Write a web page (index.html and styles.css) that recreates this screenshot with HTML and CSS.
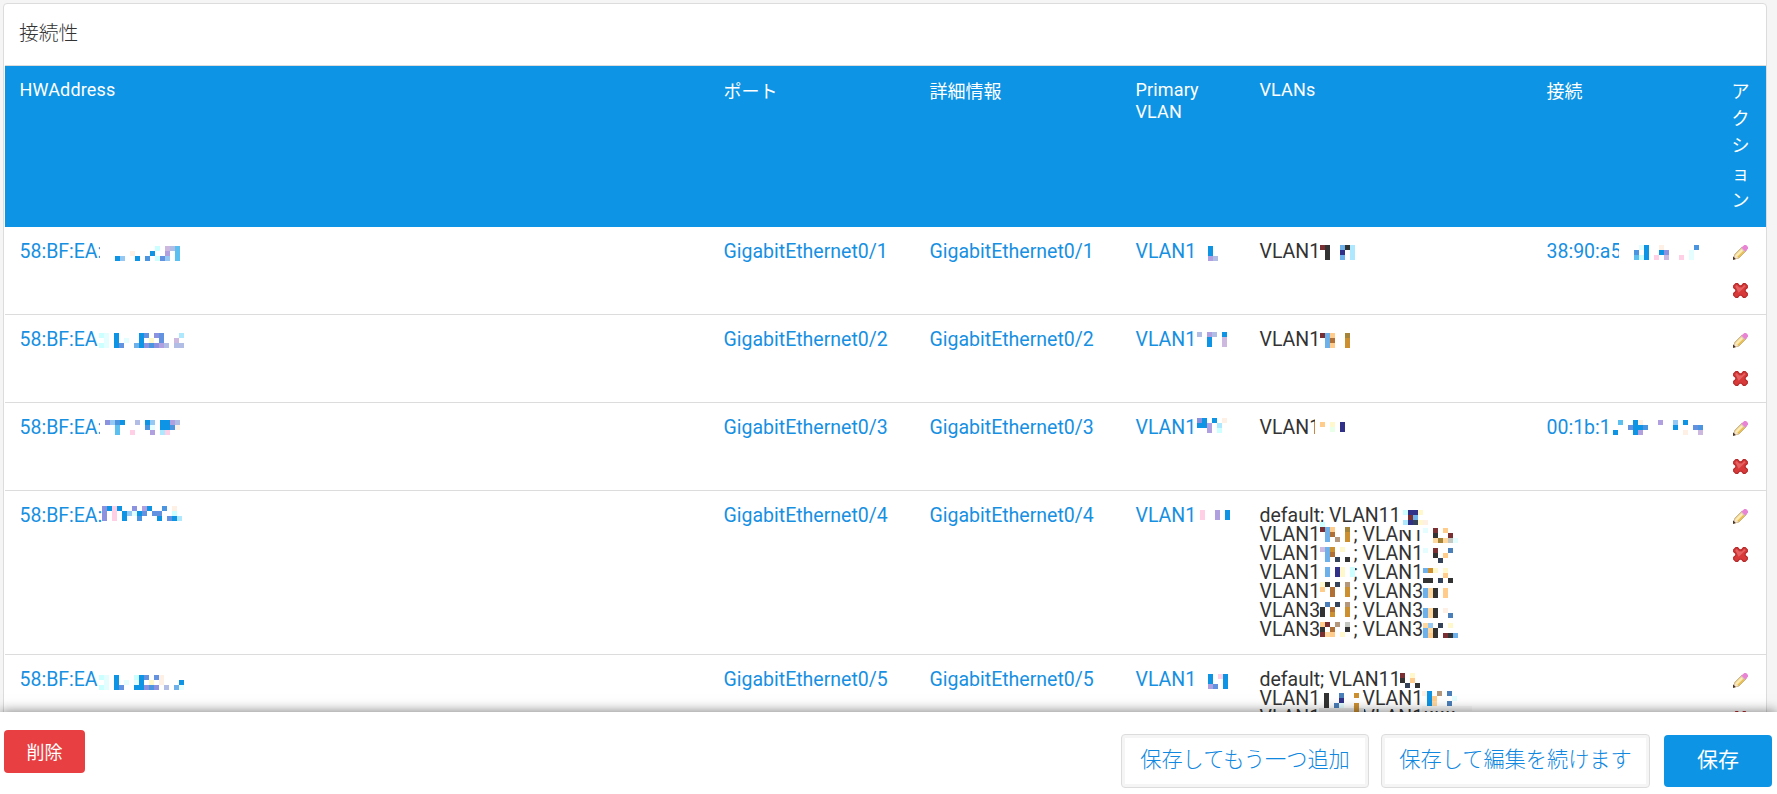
FILE: index.html
```html
<!DOCTYPE html>
<html lang="ja">
<head>
    <meta charset="UTF-8">
    <meta name="viewport" content="width=device-width, initial-scale=1.0">
    <title>接続性</title>
    <link rel="stylesheet" href="styles.css">
</head>
<body>
    <svg class="defs" width="0" height="0">
        <symbol id="pencil" viewBox="0 0 16 16">
            <path d="M1 15l1-5 8-8 4 4-8 8z" fill="#f5dda0" stroke="#b99a62" stroke-width="1"/>
            <path d="M3.500 11.500l7-7" stroke="#fff0b8" stroke-width="1.500"/>
            <path d="M5.500 13l7-7" stroke="#e8bd45" stroke-width="1.500"/>
            <path d="M1 15l1-4.500 3.500 3.500z" fill="#f4e4ce"/>
            <path d="M0 16v-4l3 3z" fill="#4a3527"/>
            <path d="M9 3l3-3h2l2 2v2l-3 3z" fill="#e884d4"/>
            <path d="M8.500 3.500l4 4" stroke="#c9bfc4" stroke-width="1"/>
        </symbol>
        <symbol id="cross" viewBox="0 0 16 16">
            <path d="M3 .7l2 0 2 2.300h2l2-2.300h2l2.300 2.300v2l-2.300 2v2l2.300 2v2l-2.300 2.300h-2l-2-2.300h-2l-2 2.300h-2l-2.300-2.300v-2l2.300-2v-2l-2.300-2v-2z" fill="#d83a3a" stroke="#b52a2a" stroke-width="1.200"/>
            <path d="M2.500 3.500l1.500-1.300 2.500 2.600h3l2.500-2.600 1.500 1.300-7.500 7z" fill="#ec7272" opacity=".7"/>
        </symbol>
    </svg>

    <main class="content">
        <section class="panel">
            <h2>接続性</h2>

            <div class="row head">
                <div>HWAddress</div>
                <div class="jp">ポート</div>
                <div class="jp">詳細情報</div>
                <div>Primary VLAN</div>
                <div>VLANs</div>
                <div class="jp">接続</div>
                <div class="jp">アクション</div>
            </div>

            <div class="row">
                <div id="hw1"><a>58:BF:EA:</a></div>
                <div><a>GigabitEthernet0/1</a></div>
                <div><a>GigabitEthernet0/1</a></div>
                <div id="primary1"><a>VLAN1</a></div>
                <div id="vlans1">VLAN1</div>
                <div id="conn1"><a>38:90:a5</a></div>
                <div class="actions"><svg><use href="#pencil"/></svg><svg><use href="#cross"/></svg></div>
            </div>

            <div class="row">
                <div id="hw2"><a>58:BF:EA</a></div>
                <div><a>GigabitEthernet0/2</a></div>
                <div><a>GigabitEthernet0/2</a></div>
                <div id="primary2"><a>VLAN1</a></div>
                <div id="vlans2">VLAN1</div>
                <div></div>
                <div class="actions"><svg><use href="#pencil"/></svg><svg><use href="#cross"/></svg></div>
            </div>

            <div class="row">
                <div id="hw3"><a>58:BF:EA:</a></div>
                <div><a>GigabitEthernet0/3</a></div>
                <div><a>GigabitEthernet0/3</a></div>
                <div id="primary3"><a>VLAN1</a></div>
                <div id="vlans3">VLAN1</div>
                <div id="conn3"><a>00:1b:1</a></div>
                <div class="actions"><svg><use href="#pencil"/></svg><svg><use href="#cross"/></svg></div>
            </div>

            <div class="row tall">
                <div id="hw4"><a>58:BF:EA:</a></div>
                <div><a>GigabitEthernet0/4</a></div>
                <div><a>GigabitEthernet0/4</a></div>
                <div id="primary4"><a>VLAN1</a></div>
                <div id="vlans4">
                    default; VLAN11<br>
                    <span class="tag">VLAN1</span>; VLAN1<br>
                    <span class="tag">VLAN1</span>; VLAN1<br>
                    <span class="tag">VLAN1</span>; VLAN1<br>
                    <span class="tag">VLAN1</span>; VLAN3<br>
                    <span class="tag">VLAN3</span>; VLAN3<br>
                    <span class="tag">VLAN3</span>; VLAN3
                </div>
                <div></div>
                <div class="actions"><svg><use href="#pencil"/></svg><svg><use href="#cross"/></svg></div>
            </div>

            <div class="row tall">
                <div id="hw5"><a>58:BF:EA</a></div>
                <div><a>GigabitEthernet0/5</a></div>
                <div><a>GigabitEthernet0/5</a></div>
                <div id="primary5"><a>VLAN1</a></div>
                <div id="vlans5">
                    default; VLAN11<br>
                    <span class="tag">VLAN1</span>; VLAN1<br>
                    <span class="tag">VLAN1</span>; VLAN1000
                </div>
                <div></div>
                <div class="actions"><svg><use href="#pencil"/></svg><svg><use href="#cross"/></svg></div>
            </div>
        </section>
    </main>

    <footer class="toolbar">
        <button class="delete">削除</button>
        <div class="save-buttons">
            <button class="secondary">保存してもう一つ追加</button>
            <button class="secondary">保存して編集を続けます</button>
            <button class="primary">保存</button>
        </div>
    </footer>

    <script src="mosaic.js"></script>
</body>
</html>
```
FILE: styles.css
```css
* {
    box-sizing: border-box;
}

body {
    margin: 0;
    height: 100vh;
    display: flex;
    flex-direction: column;
    overflow: hidden;
    background: #f5f5f5;
    color: #333;
    font-family: Roboto, "Noto Sans CJK JP", sans-serif;
    font-size: 19.5px;
    line-height: 19px;
}

.defs {
    position: absolute;
}

.content {
    flex: 1;
    min-height: 0;
    overflow: hidden;
    padding: 3px 10px 0 3px;
}

.panel {
    background: #fff;
    border: 1px solid #dcdcdc;
    border-radius: 4px;
    padding-left: 1px;
}

.panel h2 {
    margin: 0;
    height: 62px;
    padding-left: 14px;
    border-bottom: 1px solid #dcdcdc;
    font-size: 19.8px;
    font-weight: 300;
    line-height: 60px;
    color: #333;
}

.row {
    display: grid;
    grid-template-columns: 704px 206px 206px 124px 287px 185px 49px;
    height: 88px;
    border-bottom: 1px solid #dcdcdc;
}

.row > div {
    position: relative;
    padding: 15px 15px 0 14.5px;
}

.row.tall {
    height: 164px;
}

.row.head {
    height: 161px;
    border-bottom: none;
    background: #0e94e4;
    color: #fff;
    font-size: 18px;
    letter-spacing: 0.15px;
    line-height: 22px;
}

.row.head > div {
    padding-top: 13px;
}

.row.head .jp {
    padding-top: 12px;
    letter-spacing: 0;
    line-height: 27.2px;
}

.row.head .jp:last-child {
    padding-right: 14px;
    word-break: break-all;
    line-break: anywhere;
}

a {
    color: #1790e2;
}

.tag {
    display: inline-block;
    width: 94px;
}

.row .actions {
    display: flex;
    flex-direction: column;
    gap: 23px;
    padding-top: 18px;
    padding-left: 16px;
}

.actions svg {
    width: 15px;
    height: 15px;
    flex: none;
}

/* pixelated patches over the hidden part of an address */
.mosaic {
    position: absolute;
}

.toolbar {
    position: relative;
    height: 82px;
    display: flex;
    justify-content: space-between;
    align-items: flex-start;
    padding: 18px 5px 0 4px;
    background: #fff;
    box-shadow: 0 0 12px rgba(0, 0, 0, 0.55);
}

button {
    margin: 0;
    padding: 0;
    border: none;
    border-radius: 4px;
    font-family: "Noto Sans CJK JP", sans-serif;
    font-weight: 300;
}

.delete {
    width: 81px;
    height: 43px;
    padding-bottom: 1px;
    background: #e84042;
    color: #fff;
    font-size: 18px;
    font-weight: 400;
}

.save-buttons {
    display: flex;
    align-items: center;
    gap: 12px;
    padding-top: 4px;
}

.secondary {
    width: 248px;
    height: 54px;
    padding-bottom: 7px;
    background: #fff;
    border: 1px solid #dcdcdc;
    box-shadow: inset 0 0 0 3px #f5f5f5;
    color: #1088e0;
    font-size: 21.2px;
}

.secondary + .secondary {
    width: 269px;
}

.primary {
    width: 108px;
    height: 52px;
    margin-left: 2px;
    padding-bottom: 7px;
    background: #0e94e4;
    color: #fff;
    font-size: 21px;
    font-weight: 400;
}
```
FILE: mosaic.js
```js
// One letter per 5px block, a dot is left empty
const SIZE = 5;

const colors = {
    B: '#0d94e4', b: '#5bbff0', l: '#95c8f2', m: '#6393e0', x: '#4a94e0',
    p: '#b0a0e0', v: '#8b93e0', z: '#b2bde6', f: '#cdb8e0', h: '#aee8ff',
    c: '#ccffff', e: '#e4fdff', y: '#fff8cc', o: '#fff0e6', q: '#ffd0e5',
    k: '#333333', r: '#7a3032', w: '#6db0ea', s: '#ffcc8c', t: '#ffd8a0',
    n: '#b07035', d: '#cc9030', u: '#a58338', i: '#303088', j: '#35435a',
    a: '#4a7fba', g: '#e8ffe8', N: '#b5977c', G: '#c4c8c0', L: '#ebebeb',
    M: '#f8f8f8', P: '#66609a', W: '#ffffff'
};

// cell id, left, top, rows
const patches = [
    ['hw1', 95, 14, 'W/W/W/W'],
    ['hw1', 110, 19, '..WW....c.fzb/...o...B..p.b/BlW.B.x.cml.b'],
    ['hw2', 94, 18, 'ce.B....Bm.vm...h/.e.B.e..B.y.m..f./ce.Bm..wBvxvpz.zz'],
    ['hw3', 95, 14, 'W/W/W/W'],
    ['hw3', 100, 17, 'vlxB..z.Bl.BBpz/..b.....xe.BBxo/..b..q...p.hq..'],
    ['hw4', 97, 15, 'vBqB..v.pB..x.o./v.q.BleBm.mm..c./v.q.B..x...B.mBh'],
    ['hw5', 94, 20, 'ce.B...cBm.mo..../.e.B.e.eB.y.o...B/ce.Bm..BBvxv.z.we'],

    ['primary1', 87, 19, 'B./B./pz'],
    ['primary2', 76, 17, 'z.pz.B/..B..f/..B..f'],
    ['primary3', 76, 15, 'vB.B.o/BBp.h./..p.c.'],
    ['primary4', 79, 19, 'q..p.B/q..p.B'],
    ['primary5', 87, 19, 'B.qB/B..B/pm.B'],

    ['vlans1', 75, 18, 'rk..wkh/.k..i.h/.k..w.h'],
    ['vlans2', 75, 18, 'rws..u/.wn..d/.ws..d'],
    ['vlans3', 70, 14, 'W...../Ws.y.i/W..g.i/W.....'],

    ['vlans4', 158, 19, 'ciiy./.rw../hijyo'],
    ['vlans4', 154, 34, 'WWWWW'],
    ['vlans4', 75, 31, 'c...../rws..u/.wn..d/.w.N.d'],
    ['vlans4', 178, 37, 'e.r.s../..k..r./..tutGe'],
    ['vlans4', 75, 56, 'fwd.y./.wn.../.w.j.k'],
    ['vlans4', 178, 57, 'e.r..a/..k.s./...j..'],
    ['vlans4', 75, 76, '.w.iy.c/.w.iy.c'],
    ['vlans4', 178, 77, 'wdy.y./....s./kk.j.k'],
    ['vlans4', 75, 91, 'yk.j.N/s.n..d/..n..d'],
    ['vlans4', 178, 97, 'wtk.s/wtk.s'],
    ['vlans4', 75, 111, '.a.j.N/k.n..d/k.d..d'],
    ['vlans4', 178, 117, 'wtk.o./wtk..a'],
    ['vlans4', 75, 131, 'sr.N.G/k.n..k/rts.y.'],
    ['vlans4', 178, 132, 'tl.j.y./wtk..../wsk.rkw'],

    ['vlans5', 155, 18, 'r.y./k.s./.j.k'],
    ['vlans5', 74, 38, 'Wk..a..dW/Wk..i..WW/Wk.ae..dW/LLLLLLLdL/LLLLLLLPL'],
    ['vlans5', 177, 36, 'oB.N.a..../.Bs...e.../.Bt..a..../MMMMMMMMMM'],

    ['conn1', 87, 14, 'W/W/W/W'],
    ['conn1', 92, 18, '...eB..o......x/..x.B..Bv....e./..bcB.q.f..q.e.'],
    ['conn3', 81, 17, '.b..Bo...p..l.B.../...mBBx.....B...mx/B...Bp........o..f']
];

patches.forEach(([id, left, top, data]) => {
    const rows = data.split('/');
    const svg = document.createElementNS('http://www.w3.org/2000/svg', 'svg');
    svg.setAttribute('class', 'mosaic');
    svg.setAttribute('width', Math.max(...rows.map(r => r.length)) * SIZE);
    svg.setAttribute('height', rows.length * SIZE);
    svg.style.left = left + 'px';
    svg.style.top = top + 'px';

    rows.forEach((row, y) => {
        [...row].forEach((key, x) => {
            if (key === '.') return;
            const rect = document.createElementNS('http://www.w3.org/2000/svg', 'rect');
            rect.setAttribute('x', x * SIZE);
            rect.setAttribute('y', y * SIZE);
            rect.setAttribute('width', SIZE);
            rect.setAttribute('height', SIZE);
            rect.setAttribute('fill', colors[key]);
            svg.appendChild(rect);
        });
    });

    document.getElementById(id).appendChild(svg);
});
```
